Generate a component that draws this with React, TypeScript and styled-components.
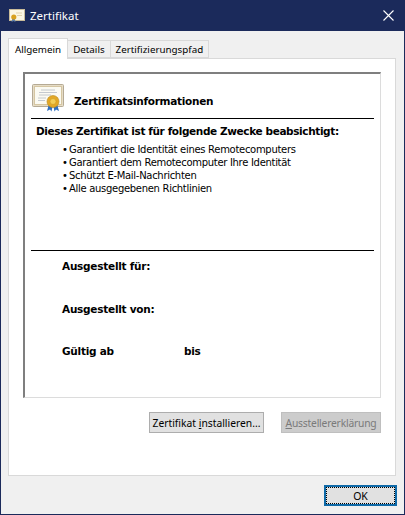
import React from 'react';
import styled, { createGlobalStyle } from 'styled-components';

const GlobalStyle = createGlobalStyle`
  html, body {
    margin: 0;
    padding: 0;
    background: #1b2a5b;
  }
  * {
    box-sizing: border-box;
  }
`;

const Dialog = styled.div`
  width: 405px;
  height: 515px;
  display: flex;
  flex-direction: column;
  background: #f0f0f0;
  border: 1px solid #1b2a5b;
  border-width: 0 1px 1px 1px;
  font-family: "Noto Sans", "Open Sans", sans-serif;
  color: #000;
  overflow: hidden;
`;

const TitleBar = styled.div`
  height: 31px;
  flex: none;
  display: flex;
  align-items: center;
  padding: 0 10px 0 8px;
  gap: 5px;
  background: #1b2a5b;
  color: #fff;
  font-size: 11.5px;
`;

const TitleText = styled.span`
  flex: 1;
`;

const Body = styled.div`
  flex: 1;
  display: flex;
  flex-direction: column;
  padding: 7px 8px 0 7px;
`;

const TabRow = styled.div`
  height: 20px;
  flex: none;
  display: flex;
  align-items: flex-end;
  position: relative;
  z-index: 1;
`;

const Tab = styled.div<{ $active?: boolean }>`
  height: ${(p) => (p.$active ? '21px' : '18px')};
  margin-bottom: ${(p) => (p.$active ? '-1px' : '0')};
  padding: 0 ${(p) => (p.$active ? '6px' : '5px')};
  display: flex;
  align-items: center;
  font-size: 9.8px;
  background: ${(p) => (p.$active ? '#fff' : '#f0f0f0')};
  border: 1px solid #d9d9d9;
  border-bottom: ${(p) => (p.$active ? 'none' : '1px solid #d9d9d9')};
  margin-left: ${(p) => (p.$active ? '0' : '-1px')};
`;

const TabPanel = styled.div`
  height: 418px;
  flex: none;
  background: #fff;
  border: 1px solid #d9d9d9;
  padding: 13px 14px 0 14px;
  display: flex;
  flex-direction: column;
`;

const InfoBox = styled.div`
  height: 326px;
  flex: none;
  border-style: solid;
  border-width: 2px 1px 1px 2px;
  border-color: #7f7f7f #dcdcdc #dcdcdc #7f7f7f;
  padding: 10px 6px 0 6px;
  display: flex;
  flex-direction: column;
  font-family: "DejaVu Sans", Verdana, sans-serif;
  font-size: 10px;
`;

const InfoHead = styled.div`
  height: 35px;
  flex: none;
  display: flex;
  align-items: center;
  gap: 10px;
  padding-left: 1px;
  border-bottom: 1px solid #000;
  padding-bottom: 6px;
`;

const InfoTitle = styled.span`
  font-weight: bold;
  font-size: 10.5px;
  letter-spacing: -0.28px;
  margin-top: 6px;
`;

const Purpose = styled.div`
  height: 132px;
  flex: none;
  padding: 5px 0 0 5px;
  border-bottom: 1px solid #000;
`;

const PurposeTitle = styled.div`
  font-weight: bold;
  font-size: 10.5px;
  letter-spacing: -0.38px;
  line-height: 14px;
`;

const PurposeList = styled.ul`
  list-style: none;
  margin: 5px 0 0;
  padding: 0 0 0 26px;
`;

const PurposeItem = styled.li`
  line-height: 13px;
  font-size: 10px;
  letter-spacing: -0.3px;
  white-space: nowrap;
  &::before {
    content: "•";
    display: inline-block;
    width: 7px;
  }
`;

const Fields = styled.div`
  flex: 1;
  padding: 8px 0 0 31px;
  display: flex;
  flex-direction: column;
  gap: 29px;
`;

const FieldLabel = styled.div`
  font-weight: bold;
  font-size: 10.5px;
  letter-spacing: -0.25px;
  line-height: 14px;
`;

const ValidRow = styled(FieldLabel)`
  display: grid;
  grid-template-columns: 122px auto;
  margin-top: -1px;
`;

const ActionRow = styled.div`
  display: flex;
  justify-content: flex-end;
  gap: 17px;
  margin-top: 14px;
`;

const Button = styled.div<{ $disabled?: boolean; $width: number }>`
  width: ${(p) => p.$width}px;
  height: 21px;
  display: flex;
  align-items: center;
  justify-content: center;
  font-size: 10.3px;
  letter-spacing: ${(p) => (p.$disabled ? '-0.2px' : '0')};
  white-space: nowrap;
  background: ${(p) => (p.$disabled ? '#cccccc' : '#e1e1e1')};
  color: ${(p) => (p.$disabled ? '#7a7a7a' : '#000')};
  border: 1px solid ${(p) => (p.$disabled ? '#bfbfbf' : '#adadad')};
`;

const Access = styled.span`
  text-decoration: underline;
`;

const Footer = styled.div`
  flex: 1;
  display: flex;
  justify-content: flex-end;
  align-items: flex-start;
  padding: 9px 0 0;
`;

const OkButton = styled.div`
  width: 73px;
  height: 21px;
  margin-right: -1px;
  display: flex;
  align-items: center;
  justify-content: center;
  font-size: 10.5px;
  background: #e1e1e1;
  border: 2px solid #0f6aa8;
  outline: 1px dotted #000;
  outline-offset: -3px;
`;

const CertIcon = () => (
  <svg width="32" height="28" viewBox="0 0 32 28" style={{ flex: 'none' }}>
    <rect x="0.5" y="0.5" width="31" height="22" rx="1" fill="#e6dcc6" stroke="#b5aa94" />
    <rect x="2.5" y="2.5" width="27" height="18" fill="#fbfaf2" stroke="#d5c6a2" />
    <path d="M9 6h14M7 8.5h18M7 11h12M6 14h8M6 16.5h7" stroke="#b8bcc4" strokeWidth="0.8" />
    <path d="M17 20l-2 7 3-1.5 1.5 2 1.5-7zM25 20l2 7-3-1.5-1.5 2-1.5-7z" fill="#2f6fc0" />
    <circle cx="21" cy="17.5" r="6" fill="#e3a826" stroke="#b98a1c" strokeWidth="0.6" />
    <circle cx="21" cy="17.5" r="3" fill="#f3cd55" stroke="#c5951f" strokeWidth="0.5" />
  </svg>
);

const SmallCertIcon = () => (
  <svg width="16" height="13" viewBox="0 0 16 13" style={{ flex: 'none' }}>
    <rect x="0.5" y="0.5" width="15" height="11" fill="#fbf6e4" stroke="#c9bb9a" />
    <path d="M7 4h6M8 6.5h5" stroke="#e0d3ad" strokeWidth="1" />
    <path d="M3.5 9l-1 4 2-1 2 1-1-4z" fill="#5f7fa8" />
    <circle cx="4.8" cy="8" r="2.6" fill="#d9a11f" />
  </svg>
);

const CloseIcon = () => (
  <svg width="11" height="11" viewBox="0 0 11 11">
    <path d="M0.5 0.5l10 10M10.5 0.5l-10 10" stroke="#fff" strokeWidth="1.1" fill="none" />
  </svg>
);

const App: React.FC = () => {
  return (
    <>
      <GlobalStyle />
      <Dialog>
        <TitleBar>
          <SmallCertIcon />
          <TitleText>Zertifikat</TitleText>
          <CloseIcon />
        </TitleBar>
        <Body>
          <TabRow>
            <Tab $active>Allgemein</Tab>
            <Tab>Details</Tab>
            <Tab>Zertifizierungspfad</Tab>
          </TabRow>
          <TabPanel>
            <InfoBox>
              <InfoHead>
                <CertIcon />
                <InfoTitle>Zertifikatsinformationen</InfoTitle>
              </InfoHead>
              <Purpose>
                <PurposeTitle>Dieses Zertifikat ist für folgende Zwecke beabsichtigt:</PurposeTitle>
                <PurposeList>
                  <PurposeItem>Garantiert die Identität eines Remotecomputers</PurposeItem>
                  <PurposeItem>Garantiert dem Remotecomputer Ihre Identität</PurposeItem>
                  <PurposeItem>Schützt E-Mail-Nachrichten</PurposeItem>
                  <PurposeItem>Alle ausgegebenen Richtlinien</PurposeItem>
                </PurposeList>
              </Purpose>
              <Fields>
                <FieldLabel>Ausgestellt für:</FieldLabel>
                <FieldLabel>Ausgestellt von:</FieldLabel>
                <ValidRow>
                  <span>Gültig ab</span>
                  <span>bis</span>
                </ValidRow>
              </Fields>
            </InfoBox>
            <ActionRow>
              <Button $width={115}>
                Zertifikat&nbsp;<Access>i</Access>nstallieren...
              </Button>
              <Button $width={100} $disabled>
                <Access>A</Access>usstellererklärung
              </Button>
            </ActionRow>
          </TabPanel>
          <Footer>
            <OkButton>OK</OkButton>
          </Footer>
        </Body>
      </Dialog>
    </>
  );
};

export default App;
